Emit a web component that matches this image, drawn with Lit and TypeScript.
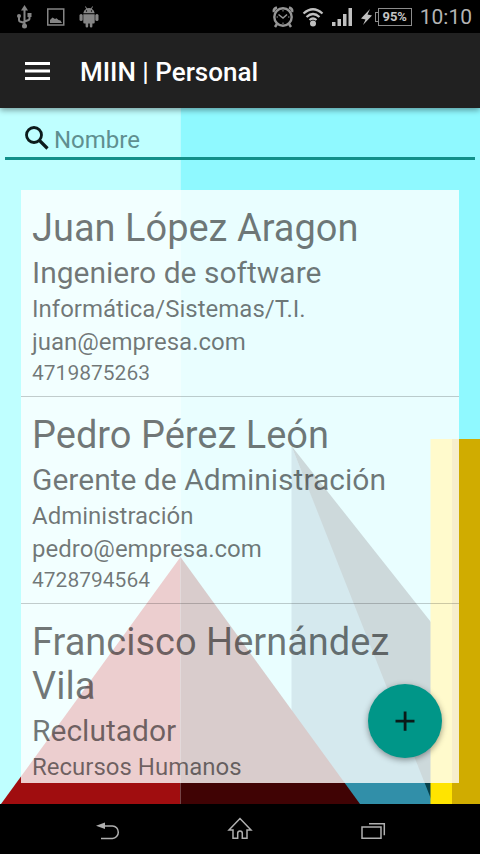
import { LitElement, html, css, svg, nothing } from "lit";
import { customElement, property } from "lit/decorators.js";

interface Person {
  name: string;
  role: string;
  area: string;
  email?: string;
  phone?: string;
}

const people: Person[] = [
  {
    name: "Juan López Aragon",
    role: "Ingeniero de software",
    area: "Informática/Sistemas/T.I.",
    email: "juan@empresa.com",
    phone: "4719875263",
  },
  {
    name: "Pedro Pérez León",
    role: "Gerente de Administración",
    area: "Administración",
    email: "pedro@empresa.com",
    phone: "4728794564",
  },
  {
    name: "Francisco Hernández Vila",
    role: "Reclutador",
    area: "Recursos Humanos",
  },
];

@customElement("status-bar")
class StatusBar extends LitElement {
  static styles = css`
    :host {
      display: flex;
      align-items: center;
      justify-content: space-between;
      height: 33px;
      padding: 0 8px 0 15px;
      background: #000;
      color: #b4b4b4;
    }
    .group {
      display: flex;
      align-items: center;
    }
    .left {
      gap: 14px;
      color: #858585;
    }
    .right {
      gap: 8px;
    }
    .power {
      display: flex;
      align-items: center;
      gap: 3px;
    }
    .battery {
      display: flex;
      align-items: center;
    }
    .nub {
      width: 3px;
      height: 10px;
      box-sizing: border-box;
      border: 1px solid #8c8c8c;
      border-right: 0;
    }
    .level {
      width: 34px;
      height: 18px;
      box-sizing: border-box;
      border: 1px solid #8c8c8c;
      font: 700 13px/16px Roboto, sans-serif;
      text-align: center;
      color: #c4c4c4;
    }
    .clock {
      padding-top: 1px;
      font: 400 21px/28px Roboto, sans-serif;
    }
    svg {
      display: block;
    }
  `;

  render() {
    return html`
      <div class="group left">
        <svg width="18" height="24" viewBox="0 0 18 24" fill="none" stroke="currentColor" stroke-width="2">
          <path d="M9.500 5V20M4 12v3q0 1 1 1.500l4.500 1.500M14.500 11v2.500q0 1-1 1.500l-4 1.500" />
          <path d="M9.500 0l3.500 5.500h-7z" fill="currentColor" stroke="none" />
          <circle cx="9.500" cy="21" r="2.500" fill="currentColor" stroke="none" />
          <circle cx="4" cy="11" r="2" fill="currentColor" stroke="none" />
          <rect x="12.500" y="8" width="4" height="4" fill="currentColor" stroke="none" />
        </svg>
        <svg width="18" height="18" viewBox="0 0 18 18" fill="none" stroke="currentColor">
          <rect x="0.750" y="1" width="16" height="16" stroke-width="1.500" />
          <path d="M3 15v-3l2.500-2.500 2.500 1.500 1.500-.7 2 1.700 2 .5 1.500 2.500z" fill="currentColor" stroke="none" />
        </svg>
        <svg width="20" height="22" viewBox="0 0 20 22" fill="currentColor">
          <path d="M4.300 7.300a5.700 5.700 0 0 1 2.900-4.600L6 .8l.7-.5L8 2.300a6 6 0 0 1 4 0L13.300.3l.7.5-1.200 1.900a5.700 5.700 0 0 1 2.900 4.600zM4.300 8.200h11.400v8.300q0 1-1 1h-1.300v2.700a1.300 1.300 0 0 1-2.600 0v-2.700H9.200v2.700a1.300 1.300 0 0 1-2.600 0v-2.700H5.300q-1 0-1-1z" />
          <rect x="0.500" y="8" width="3.200" height="7" rx="1.500" />
          <rect x="16.300" y="8" width="3.200" height="7" rx="1.500" />
          <circle cx="7.500" cy="5" r=".7" fill="#000" />
          <circle cx="12.500" cy="5" r=".7" fill="#000" />
        </svg>
      </div>
      <div class="group right">
        <svg width="22" height="24" viewBox="0 0 22 24" fill="none" stroke="#969696">
          <circle cx="11" cy="12" r="8.700" stroke-width="2.400" />
          <path d="M2 7q-1-3 3-4.500M20 7q1-3-3-4.500M5 19l-2 3M17 19l2 3" stroke-width="2.500" />
          <path d="M6.500 9.500L11 13l4-3.500" stroke-width="1.500" />
          <path d="M11 5v1.500M11 17.500V19M4.500 12H6M16 12h1.500" />
        </svg>
        <svg width="22" height="20" viewBox="0 0 22 20" fill="none" stroke="#c0c0c0" stroke-width="2.200">
          <path d="M1.500 6.500q9.500-8.500 19 0M4.500 10q6.500-6 13 0M7.500 13q3.500-3 7 0" />
          <circle cx="11" cy="16.500" r="3" fill="#c0c0c0" stroke="none" />
        </svg>
        <svg width="21" height="20" viewBox="0 0 21 20" fill="#c0c0c0">
          <path d="M0 15h3.500v4H0zM5.500 12H9v7H5.500zM11 7h3.500v12H11zM16.500 1H20v18h-3.500z" />
        </svg>
        <div class="power">
          <svg width="11" height="18" viewBox="0 0 11 18" fill="#c0c0c0">
            <path d="M9 1L0 10.500l4.500 1L2 17l9-9.500-4.500-1z" />
          </svg>
          <div class="battery"><span class="nub"></span><span class="level">95%</span></div>
        </div>
        <time class="clock">10:10</time>
      </div>
    `;
  }
}

@customElement("app-header")
class AppHeader extends LitElement {
  static styles = css`
    :host {
      position: relative;
      z-index: 1;
      display: flex;
      align-items: center;
      gap: 30px;
      height: 75px;
      padding: 0 24px;
      background: #212121;
      color: #fff;
      box-shadow: 0 2px 6px rgba(0, 0, 0, 0.4);
    }
    .menu {
      display: block;
      padding: 0;
      border: 0;
      background: none;
      color: inherit;
    }
    svg {
      display: block;
    }
    .title {
      margin: 0;
      padding-top: 2px;
      font: 500 26px/32px Roboto, sans-serif;
    }
  `;

  render() {
    return html`
      <button class="menu" aria-label="Menú">
        <svg width="26" height="18" viewBox="0 0 26 18" fill="currentColor">
          <path d="M1 0h25v3H1zM1 7.500h25v3H1zM1 15h25v3H1z" />
        </svg>
      </button>
      <h1 class="title">MIIN | Personal</h1>
    `;
  }
}

@customElement("person-card")
class PersonCard extends LitElement {
  @property({ attribute: false }) person!: Person;

  static styles = css`
    :host {
      display: flex;
      flex-direction: column;
      gap: 5px;
      padding: 16px 11px 11px;
      font-family: Roboto, sans-serif;
      color: rgba(0, 0, 0, 0.54);
    }
    h2,
    p {
      margin: 0;
      font-weight: 400;
    }
    .name {
      font-size: 38px;
      line-height: 44px;
    }
    .role {
      font-size: 30px;
      line-height: 35px;
    }
    .detail {
      font-size: 24px;
      line-height: 28px;
    }
    .phone {
      font-size: 21px;
      line-height: 24px;
    }
  `;

  render() {
    const p = this.person;
    return html`
      <h2 class="name">${p.name}</h2>
      <p class="role">${p.role}</p>
      <p class="detail">${p.area}</p>
      ${p.email ? html`<p class="detail">${p.email}</p>` : nothing}
      ${p.phone ? html`<p class="phone">${p.phone}</p>` : nothing}
    `;
  }
}

@customElement("nav-bar")
class NavBar extends LitElement {
  static styles = css`
    :host {
      display: flex;
      align-items: center;
      justify-content: center;
      gap: 93px;
      height: 50px;
      background: #000;
    }
    button {
      display: flex;
      justify-content: center;
      width: 40px;
      padding: 0;
      border: 0;
      background: none;
    }
    svg {
      display: block;
    }
  `;

  render() {
    const icon = (shape: unknown) => html`
      <svg width="26" height="24" viewBox="0 0 26 24" fill="none" stroke="#b0b0b0" stroke-width="1.500">${shape}</svg>
    `;
    return html`
      <button aria-label="Atrás">
        ${icon(svg`<path d="M8 9h10.500a5.800 6.200 0 0 1 0 12.400H7" /><path d="M2 8.700l9-3.200v6.400z" fill="#b0b0b0" stroke="none" />`)}
      </button>
      <button aria-label="Inicio">
        ${icon(svg`<path d="M13 1.500L2 13h4v8.300h4.700v-5q0-2.300 2.300-2.300t2.300 2.300v5H20V13h4z" />`)}
      </button>
      <button aria-label="Recientes">
        ${icon(svg`<path d="M2 10h19v11.300H2zM9 6.700h15.300v11.500" />`)}
      </button>
    `;
  }
}

@customElement("app-root")
class AppRoot extends LitElement {
  static styles = css`
    :host {
      display: flex;
      flex-direction: column;
      height: 100vh;
      font-family: Roboto, sans-serif;
    }
    .content {
      position: relative;
      display: flex;
      flex: 1;
      flex-direction: column;
      min-height: 0;
    }
    .scenery {
      position: absolute;
      inset: 0;
      width: 100%;
      height: 100%;
    }
    .search {
      position: relative;
      display: flex;
      align-items: center;
      gap: 4px;
      box-sizing: border-box;
      height: 52px;
      margin: 0 5px;
      padding: 10px 18px 0 19px;
      border-bottom: 3px solid #12908a;
    }
    .search svg {
      display: block;
      flex: none;
    }
    .search input {
      flex: 1;
      min-width: 0;
      padding: 4px 0 0;
      border: 0;
      outline: 0;
      background: none;
      color: #222;
      font: 400 24px/30px Roboto, sans-serif;
    }
    .search input::placeholder {
      color: #5f8f90;
      opacity: 1;
    }
    .list {
      position: relative;
      flex: 1;
      min-height: 0;
      margin: 30px 21px 21px;
      padding: 0;
      overflow-y: auto;
      scrollbar-width: none;
      list-style: none;
      background: rgba(255, 255, 255, 0.8);
    }
    .list li + li {
      border-top: 1px solid rgba(0, 0, 0, 0.2);
    }
    .add {
      position: absolute;
      right: 38px;
      bottom: 46px;
      display: grid;
      place-items: center;
      width: 74px;
      height: 74px;
      padding: 0;
      border: 0;
      border-radius: 50%;
      background: #009688;
      box-shadow: 0 2px 6px rgba(0, 0, 0, 0.4);
    }
  `;

  render() {
    return html`
      <status-bar></status-bar>
      <app-header></app-header>
      <main class="content">
        <svg class="scenery" viewBox="0 0 480 696" preserveAspectRatio="none" aria-hidden="true">
          <path fill="#bfffff" d="M0 0h180.500v696H0z" />
          <path fill="#8ff9ff" d="M180.500 0H480v696H180.500z" />
          <path fill="#318fa9" d="M291.500 338L436 696H291.500z" />
          <path fill="#05414b" d="M291.500 338L575 696H433z" />
          <path fill="#a00d0f" d="M180.500 449V696H1z" />
          <path fill="#400304" d="M180.500 449V696H360z" />
          <path fill="#ffe400" d="M430.500 331H480v365h-49.500z" />
          <path fill="#d0ac00" d="M452 331h28v365h-28z" />
        </svg>
        <label class="search">
          <svg width="26" height="26" viewBox="0 0 26 26" fill="none" stroke="#0c1b1c" stroke-width="2.800">
            <circle cx="10" cy="10" r="7.500" />
            <path d="M15.500 15.500l8 8" stroke-width="3.200" />
          </svg>
          <input type="text" placeholder="Nombre" aria-label="Nombre" />
        </label>
        <ul class="list">
          ${people.map((p) => html`<li><person-card .person=${p}></person-card></li>`)}
        </ul>
        <button class="add" aria-label="Agregar">
          <svg width="20" height="20" viewBox="0 0 20 20" fill="#0a1a18">
            <path d="M8.700 .5h2.800v8.200h8v2.800h-8v8.200H8.700v-8.200H.5V8.700h8.200z" />
          </svg>
        </button>
      </main>
      <nav-bar></nav-bar>
    `;
  }
}
